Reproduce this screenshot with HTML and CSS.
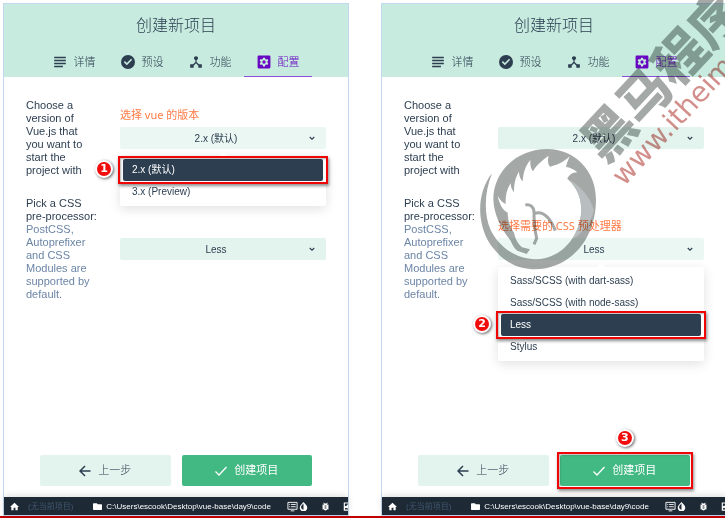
FILE: index.html
```html
<!DOCTYPE html>
<html lang="zh-CN">
<head>
<meta charset="utf-8">
<meta name="viewport" content="width=device-width, initial-scale=1">
<title>创建新项目</title>
<link rel="stylesheet" href="styles.css">
</head>
<body>
<svg class="sprite" aria-hidden="true">
  <symbol id="i-lines" viewBox="0 0 24 24"><path d="M2 3h20v2.500H2zM2 8.200h20v2.500H2zM2 13.400h20v2.500H2zM2 18.500h15v2.500H2z"/></symbol>
  <symbol id="i-check" viewBox="0 0 24 24"><path d="M12 0a12 12 0 1 0 0 24 12 12 0 0 0 0-24zM10 17.500 4.800 12.300l1.900-1.900L10 13.700l7.300-7.300 1.900 1.900z"/></symbol>
  <symbol id="i-hub" viewBox="0 0 24 24"><path d="M17 16l-4-4V8.800A3.500 3.500 0 1 0 11 8.800V12l-4 4H2v6h6v-3.500l4-4.300 4 4.300V22h6v-6z"/></symbol>
  <symbol id="i-settings" viewBox="0 0 24 24"><path fill-rule="evenodd" d="M3 1h18a2 2 0 0 1 2 2v18a2 2 0 0 1-2 2H3a2 2 0 0 1-2-2V3a2 2 0 0 1 2-2zM10.300 4.500 9.900 6.800 8.400 7.700 6.200 6.800 4.500 9.800l1.800 1.400v1.600L4.500 14.200l1.700 3 2.200-.9 1.500.9.400 2.300h3.400l.4-2.300 1.500-.9 2.200.9 1.700-3-1.800-1.400v-1.600l1.800-1.400-1.700-3-2.200.9-1.500-.9-.4-2.300zM12 9.200a2.800 2.800 0 1 1 0 5.600 2.800 2.800 0 0 1 0-5.600z"/></symbol>
  <symbol id="i-down" viewBox="0 0 24 24"><path fill="none" stroke="currentColor" stroke-width="4.500" d="m3 8 9 9 9-9"/></symbol>
  <symbol id="i-back" viewBox="0 0 24 24"><path fill="none" stroke="currentColor" stroke-width="3" d="M23 12H3M12 2 2 12l10 10"/></symbol>
  <symbol id="i-done" viewBox="0 0 24 24"><path fill="none" stroke="currentColor" stroke-width="2.600" d="m1 13 7 7L23 4"/></symbol>
  <symbol id="i-home" viewBox="0 0 24 24"><path d="M9.500 22v-7h5v7h6v-9H24L12 2 0 13h3.500v9z"/></symbol>
  <symbol id="i-folder" viewBox="0 0 24 24"><path d="M10 3H2a2 2 0 0 0-2 2v14a2 2 0 0 0 2 2h20a2 2 0 0 0 2-2V8a2 2 0 0 0-2-2h-9z"/></symbol>
  <symbol id="i-screen" viewBox="0 0 24 24"><path fill="none" stroke="currentColor" stroke-width="2" d="M2 3h20v15H2zM8 21.500h8M5 7.500h2M9 7.500h10M5 12.500h2M9 12.500h10"/></symbol>
  <symbol id="i-drop" viewBox="0 0 24 24"><path fill-rule="evenodd" d="M12 0 5.500 7.500a10 10 0 1 0 13 0zM12 4v16.500a7 7 0 0 1-5-11z"/></symbol>
  <symbol id="i-bug" viewBox="0 0 24 24"><path fill-rule="evenodd" d="M21 7h-3.500l-1.700-1.900L18 3l-1.500-1.500L14 4h-4L7.500 1.500 6 3l2.200 2.100L6.500 7H3v2.500h2.500V12H3v2.500h2.500V17H3v2.500h3.500a6.500 6.500 0 0 0 11 0H21V17h-2.500v-2.500H21V12h-2.500V9.500H21zM9.500 9.500h5V12h-5zM9.500 14.500h5V17h-5z"/></symbol>
  <symbol id="i-image" viewBox="0 0 24 24"><path fill-rule="evenodd" d="M2 1h20v22H2zM5 4v7l6-2V7l6-3zM5 17v3h14v-6l-7 3-4-2z"/></symbol>
</svg>

<main class="page">
  <section class="panel">
    <header class="head">
      <h1 class="title">创建新项目</h1>
      <nav class="tabs">
        <a class="tab" href="#"><svg class="icon"><use href="#i-lines"/></svg>详情</a>
        <a class="tab" href="#"><svg class="icon"><use href="#i-check"/></svg>预设</a>
        <a class="tab" href="#"><svg class="icon"><use href="#i-hub"/></svg>功能</a>
        <a class="tab active" href="#"><svg class="icon"><use href="#i-settings"/></svg>配置</a>
      </nav>
    </header>
    <div class="form">
      <div class="row">
        <label class="label" for="version-a">Choose a version of Vue.js that you want to start the project with</label>
        <div class="field open">
          <span class="hint">选择 vue 的版本</span>
          <select class="select" id="version-a"><option>2.x (默认)</option></select>
          <svg class="chevron"><use href="#i-down"/></svg>
          <ul class="menu" role="listbox" aria-label="Vue.js">
            <li class="item selected framed" role="option" aria-selected="true">2.x (默认)<span class="badge beside">1</span></li>
            <li class="item" role="option">3.x (Preview)</li>
          </ul>
        </div>
      </div>
      <div class="row">
        <label class="label" for="css-a">Pick a CSS pre-processor: <span class="note">PostCSS, Autoprefixer and CSS Modules are supported by default.</span></label>
        <div class="field">
          <select class="select" id="css-a"><option>Less</option></select>
          <svg class="chevron"><use href="#i-down"/></svg>
        </div>
      </div>
    </div>
    <div class="actions">
      <button class="button" type="button"><svg class="sign"><use href="#i-back"/></svg>上一步</button>
      <button class="button primary" type="button"><svg class="sign"><use href="#i-done"/></svg>创建项目</button>
    </div>
    <footer class="status">
      <svg class="glyph"><use href="#i-home"/></svg>
      <span class="project">(无当前项目)</span>
      <svg class="glyph"><use href="#i-folder"/></svg>
      <span class="path">C:\Users\escook\Desktop\vue-base\day9\code</span>
      <span class="tools">
        <span class="pair"><svg class="glyph wide"><use href="#i-screen"/></svg><svg class="glyph"><use href="#i-drop"/></svg></span>
        <svg class="glyph"><use href="#i-bug"/></svg>
        <svg class="glyph"><use href="#i-image"/></svg>
      </span>
    </footer>
  </section>

  <section class="panel">
    <header class="head">
      <h1 class="title">创建新项目</h1>
      <nav class="tabs">
        <a class="tab" href="#"><svg class="icon"><use href="#i-lines"/></svg>详情</a>
        <a class="tab" href="#"><svg class="icon"><use href="#i-check"/></svg>预设</a>
        <a class="tab" href="#"><svg class="icon"><use href="#i-hub"/></svg>功能</a>
        <a class="tab active" href="#"><svg class="icon"><use href="#i-settings"/></svg>配置</a>
      </nav>
    </header>
    <div class="form">
      <div class="row">
        <label class="label" for="version-b">Choose a version of Vue.js that you want to start the project with</label>
        <div class="field">
          <select class="select" id="version-b"><option>2.x (默认)</option></select>
          <svg class="chevron"><use href="#i-down"/></svg>
        </div>
      </div>
      <div class="row">
        <label class="label" for="css-b">Pick a CSS pre-processor: <span class="note">PostCSS, Autoprefixer and CSS Modules are supported by default.</span></label>
        <div class="field open">
          <span class="hint">选择需要的 CSS 预处理器</span>
          <select class="select" id="css-b"><option>Less</option></select>
          <svg class="chevron"><use href="#i-down"/></svg>
          <ul class="menu" role="listbox" aria-label="CSS">
            <li class="item" role="option">Sass/SCSS (with dart-sass)</li>
            <li class="item" role="option">Sass/SCSS (with node-sass)</li>
            <li class="item selected framed" role="option" aria-selected="true">Less<span class="badge beside">2</span></li>
            <li class="item" role="option">Stylus</li>
          </ul>
        </div>
      </div>
    </div>
    <div class="actions">
      <button class="button" type="button"><svg class="sign"><use href="#i-back"/></svg>上一步</button>
      <button class="button primary framed" type="button"><svg class="sign"><use href="#i-done"/></svg>创建项目<span class="badge above">3</span></button>
    </div>
    <footer class="status">
      <svg class="glyph"><use href="#i-home"/></svg>
      <span class="project">(无当前项目)</span>
      <svg class="glyph"><use href="#i-folder"/></svg>
      <span class="path">C:\Users\escook\Desktop\vue-base\day9\code</span>
      <span class="tools">
        <span class="pair"><svg class="glyph wide"><use href="#i-screen"/></svg><svg class="glyph"><use href="#i-drop"/></svg></span>
        <svg class="glyph"><use href="#i-bug"/></svg>
        <svg class="glyph"><use href="#i-image"/></svg>
      </span>
    </footer>
    <svg class="watermark" viewBox="381 0 344 280" aria-hidden="true">
      <g transform="translate(470 130) scale(.3333)">
        <path class="mark" d="M66 130C18 190 18 290 70 355C105 400 150 418 195 418C300 416 378 330 378 208C378 120 312 57 232 57C140 57 70 125 70 208C72 255 92 295 122 332C128 346 134 356 142 362L170 372L180 358L156 352C140 336 136 325 132 308C116 285 114 265 113 248C98 240 88 222 83 197C90 210 98 218 107 222C106 198 110 178 122 160C122 172 126 180 132 186C132 162 136 142 147 125C147 138 152 148 158 154C160 128 166 108 181 90C180 106 183 116 189 124C200 104 216 92 236 77C232 92 234 102 240 110C258 106 280 98 299 79C294 92 290 102 288 111C300 112 312 118 322 127C306 128 298 134 292 146C322 172 334 205 334 240C330 325 270 388 195 388C140 386 90 355 62 300C40 250 44 185 66 130z"/>
        <path class="shade" d="M292 146C322 172 334 205 334 240C334 275 322 305 304 330C340 310 366 270 372 240C360 200 330 165 292 146z"/>
        <path class="vein" d="M166 225C182 222 192 232 192 248C192 275 192 290 200 325L192 343M194 250C220 242 240 262 256 302"/>
      </g>
      <text class="brand" transform="translate(605 165) rotate(-47)">黑马程序</text>
      <text class="site" transform="translate(624 187) rotate(-47)">www.itheim</text>
    </svg>
  </section>
</main>
</body>
</html>
```

FILE: styles.css
```css
* {
  box-sizing: border-box;
}

html {
  overflow-x: hidden;
}

body {
  margin: 0;
  font-family: "Liberation Sans", "Noto Sans CJK SC", sans-serif;
  font-size: 11px;
  line-height: 13px;
  color: #2c3e50;
  background: #fff;
}

.sprite {
  position: absolute;
  width: 0;
  height: 0;
}

svg {
  fill: currentColor;
  flex: none;
}

.page {
  display: grid;
  grid-template-columns: 1fr 1fr;
  gap: 32px;
  min-height: 100vh;
  margin-right: -2px;
  padding: 3px 0 0 3px;
  border-bottom: 2px solid #c00000;
  overflow: hidden;
}

.panel {
  position: relative;
  display: flex;
  flex-direction: column;
  min-width: 0;
  border: 1px solid #c3d7ee;
}

.head {
  background: #c7ebdf;
}

.title {
  margin: 0;
  font-size: 16px;
  font-weight: 300;
  line-height: 44px;
  text-align: center;
}

.tabs {
  display: flex;
  justify-content: center;
}

.tab {
  display: flex;
  align-items: center;
  justify-content: center;
  gap: 7px;
  width: 68px;
  height: 29px;
  border-bottom: 1px solid transparent;
  color: #2c3e50;
  font-weight: 300;
  text-decoration: none;
}

.tab.active {
  color: #6806c1;
  border-color: #8a50d8;
}

.icon {
  width: 14px;
  height: 14px;
}

.sign {
  width: 12px;
  height: 12px;
}

.form {
  display: grid;
  gap: 20px;
  padding: 22px;
}

.row {
  display: grid;
  grid-template-columns: 72px 1fr;
  gap: 22px;
  align-items: center;
}

.note {
  color: #6b85a6;
}

.field {
  position: relative;
  display: grid;
}

.hint {
  position: absolute;
  bottom: 100%;
  left: 0;
  padding-bottom: 6px;
  color: #ff7a45;
  font-family: "Noto Sans", "Noto Sans CJK SC", sans-serif;
  white-space: nowrap;
}

.select {
  appearance: none;
  width: 100%;
  height: 22px;
  padding: 0 14px 0 0;
  border: 0;
  border-radius: 2px;
  background: #e3f4ee;
  color: #2c3e50;
  font: inherit;
  font-size: 10px;
  text-align: center;
  text-align-last: center;
}

.open .select {
  background: #ebf7f3;
}

.chevron {
  position: absolute;
  top: 8px;
  right: 11px;
  width: 6px;
  height: 6px;
}

.menu {
  position: absolute;
  top: 100%;
  left: 0;
  right: 0;
  margin: 7px 0 0;
  padding: 3px;
  list-style: none;
  background: #fff;
  border-radius: 2px;
  box-shadow: 0 3px 12px rgba(0, 0, 0, .12);
  font-size: 10px;
}

.menu::before {
  content: "";
  position: absolute;
  bottom: 100%;
  left: 50%;
  margin-left: -4px;
  border: 4px solid transparent;
  border-top: 0;
  border-bottom-color: #fff;
}

.item {
  position: relative;
  padding-left: 9px;
  line-height: 22px;
}

.item.selected {
  background: #2c3e50;
  color: #fff;
  border-radius: 2px;
}

.framed::after {
  content: "";
  position: absolute;
  inset: -3px -5px;
  border: 2px solid #f00505;
  box-shadow: 1px 2px 3px rgba(0, 0, 0, .45), inset 1px 1px 2px rgba(0, 0, 0, .3);
}

.button.framed::after {
  inset: -3px;
}

.badge {
  position: absolute;
  width: 18px;
  height: 18px;
  border: 2px solid #fff;
  border-radius: 50%;
  background: #f20d0d;
  box-shadow: 1px 1px 3px rgba(0, 0, 0, .6);
  color: #fff;
  font-family: "DejaVu Sans", sans-serif;
  font-size: 11px;
  font-weight: 700;
  line-height: 14px;
  text-align: center;
}

.badge.beside {
  top: 1px;
  right: 100%;
  margin-right: 10px;
}

.badge.above {
  bottom: 100%;
  left: 50%;
  margin: 0 0 8px -9px;
}

.actions {
  display: flex;
  gap: 11px;
  margin-top: auto;
  padding: 11px 36px;
}

.button {
  position: relative;
  flex: 1;
  display: flex;
  align-items: center;
  justify-content: center;
  gap: 7px;
  height: 31px;
  padding: 0;
  border: 0;
  border-radius: 2px;
  background: #e3f4ee;
  color: #2c3e50;
  font: inherit;
  font-weight: 300;
}

.button.primary {
  background: #42b983;
  color: #fff;
  font-weight: 400;
}

.status {
  display: flex;
  align-items: center;
  height: 18px;
  padding-left: 6px;
  overflow: hidden;
  background: #1d2935;
  box-shadow: 0 -2px 6px rgba(0, 0, 0, .12);
  color: #fff;
  font-size: 8px;
  white-space: nowrap;
}

.glyph {
  width: 9px;
  height: 9px;
}

.glyph.wide {
  width: 11px;
  height: 11px;
}

.project {
  margin: 0 20px 0 9px;
  color: #40566e;
}

.path {
  margin-left: 4px;
}

.tools {
  display: flex;
  align-items: center;
  gap: 13px;
  margin-left: 16px;
}

.pair {
  display: flex;
  align-items: center;
  gap: 1px;
}

.watermark {
  position: absolute;
  top: -4px;
  left: -1px;
  width: 100%;
  aspect-ratio: 344 / 280;
  mix-blend-mode: multiply;
  pointer-events: none;
  overflow: hidden;
}

.mark,
.brand {
  fill: #a4a9a7;
}

.shade {
  fill: #b8bebf;
}

.vein {
  fill: none;
  stroke: #a4a9a7;
  stroke-width: 9;
}

.brand {
  font-family: "Noto Sans CJK SC", sans-serif;
  font-size: 52px;
  font-weight: 900;
}

.site {
  fill: #d28f8b;
  font-family: "DejaVu Sans", sans-serif;
  font-size: 28px;
}
```
